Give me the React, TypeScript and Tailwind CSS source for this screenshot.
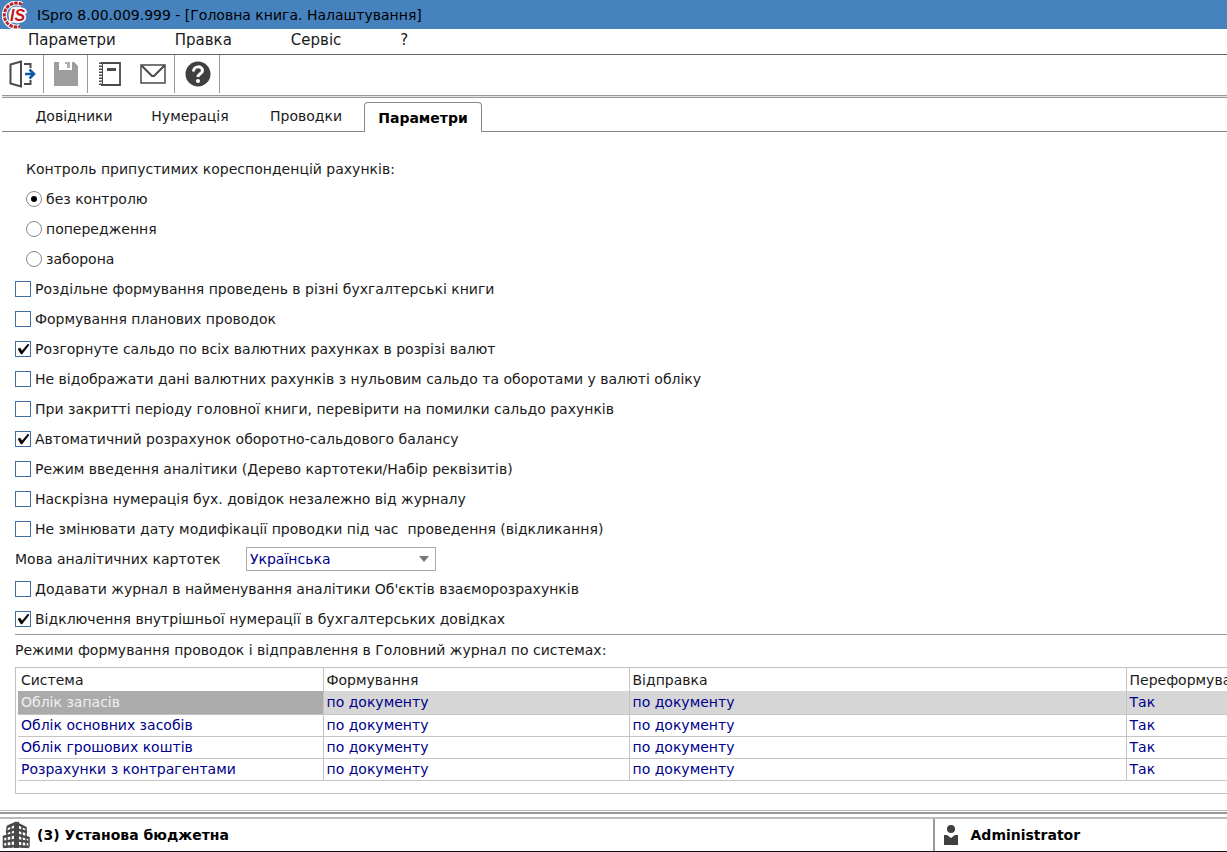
import React, { useState } from "react"

interface CheckOption {
    id: string
    label: string
    checked: boolean
}

interface SystemRow {
    system: string
    forming: string
    sending: string
    reforming: string
}

const MENU = ["Параметри", "Правка", "Сервіс", "?"]
const TABS = ["Довідники", "Нумерація", "Проводки", "Параметри"]
const CONTROL_MODES = ["без контролю", "попередження", "заборона"]

const MAIN_OPTIONS: CheckOption[] = [
    { id: "separate", label: "Роздільне формування проведень в різні бухгалтерські книги", checked: false },
    { id: "planned", label: "Формування планових проводок", checked: false },
    { id: "expanded", label: "Розгорнуте сальдо по всіх валютних рахунках в розрізі валют", checked: true },
    { id: "hide-zero", label: "Не відображати дані валютних рахунків з нульовим сальдо та оборотами у валюті обліку", checked: false },
    { id: "closing", label: "При закритті періоду головної книги, перевірити на помилки сальдо рахунків", checked: false },
    { id: "auto-balance", label: "Автоматичний розрахунок оборотно-сальдового балансу", checked: true },
    { id: "analytics", label: "Режим введення аналітики (Дерево картотеки/Набір реквізитів)", checked: false },
    { id: "numbering", label: "Наскрізна нумерація бух. довідок незалежно від журналу", checked: false },
    { id: "mod-date", label: "Не змінювати дату модифікації проводки під час  проведення (відкликання)", checked: false },
]

const EXTRA_OPTIONS: CheckOption[] = [
    { id: "add-journal", label: "Додавати журнал в найменування аналітики Об'єктів взаєморозрахунків", checked: false },
    { id: "no-inner", label: "Відключення внутрішньої нумерації в бухгалтерських довідках", checked: true },
]

const SYSTEMS: SystemRow[] = [
    "Облік запасів",
    "Облік основних засобів",
    "Облік грошових коштів",
    "Розрахунки з контрагентами",
].map(system => ({ system, forming: "по документу", sending: "по документу", reforming: "Так" }))

function Logo() {
    return (
        <svg width="28" height="28" viewBox="0 0 28 28" aria-hidden="true">
            <path d="M20 3.500A12 12 0 1 0 18 25.500" fill="none" stroke="#fff" strokeWidth="5" />
            <path d="M20 3.500A12 12 0 1 0 18 25.500" fill="none" stroke="#b8252c" strokeWidth="3" strokeDasharray="3.500 1" />
            <circle cx="15" cy="14" r="8.500" fill="#f2e6e8" />
            <text x="8" y="20" fontSize="16" fontWeight="bold" fontStyle="italic" fontFamily="Liberation Sans, sans-serif" fill="#c4161c" stroke="#fff" strokeWidth="3" paintOrder="stroke">IS</text>
        </svg>
    )
}

function ExitIcon() {
    return (
        <svg width="28" height="30" viewBox="0 0 28 30" fill="none" aria-hidden="true">
            <path d="M2.500 5.500L13 2.500v25L2.500 24.500z" stroke="#4a4a4a" strokeWidth="2" />
            <path d="M16 5h6.500v4M16 25h6.500v-4" stroke="#4a4a4a" strokeWidth="2" />
            <path d="M17 15h8M21.500 10.500L26 15l-4.500 4.500" stroke="#0e5aa7" strokeWidth="2.500" />
        </svg>
    )
}

function SaveIcon() {
    return (
        <svg width="26" height="26" viewBox="0 0 26 26" aria-hidden="true">
            <path d="M1 1h5v8h13V1h2l4 4v20H1z" fill="#9d9d9d" />
            <path d="M12 1h5v6h-3V3h-2z" fill="#b0b0b0" />
        </svg>
    )
}

function NotebookIcon() {
    return (
        <svg width="24" height="26" viewBox="0 0 24 26" fill="none" stroke="#4a4a4a" aria-hidden="true">
            <path d="M3 2h19v22H3" strokeWidth="1.800" />
            <path d="M4.500 2v22" strokeWidth="1" />
            <path d="M2.500 1.500v23" strokeWidth="3" strokeDasharray="1.500 1.500" />
            <path d="M9 8.500h9" strokeWidth="3" />
        </svg>
    )
}

function MailIcon() {
    return (
        <svg width="26" height="20" viewBox="0 0 26 20" fill="none" stroke="#4a4a4a" strokeWidth="1.500" aria-hidden="true">
            <path d="M1 1h24v18H1z" />
            <path d="M1.500 1.500L12 12h2L24.500 1.500" strokeWidth="2" />
        </svg>
    )
}

function HelpIcon() {
    return (
        <svg width="26" height="26" viewBox="0 0 26 26" fill="none" aria-hidden="true">
            <circle cx="13" cy="13" r="12.500" fill="#404040" />
            <path d="M8.500 10.500c0-6 9-6 9-1 0 3.500-4.500 3-4.500 6.500" stroke="#fff" strokeWidth="3" />
            <circle cx="13" cy="20" r="2" fill="#fff" />
        </svg>
    )
}

function BuildingIcon() {
    return (
        <svg width="28" height="28" viewBox="0 0 28 28" fill="none" stroke="#484848" aria-hidden="true">
            {/* Front corner of the block, then the floors on both sides */}
            <path d="M12 2l5-1.500V27h-5z" fill="#484848" stroke="none" />
            <path d="M5 6l9-4 10 5M4 11l9-3 12 3M1 16l12-3 14 4M1 21l12-2 14 2M1 26l12-1 14 1" strokeWidth="2.500" />
            <path d="M5 6v21M9 4v23M20 4v23M24 6v21M1.500 15v11M27 16v10" strokeWidth="1.500" />
        </svg>
    )
}

function UserIcon() {
    return (
        <svg width="16" height="22" viewBox="0 0 16 22" fill="#404040" aria-hidden="true">
            <circle cx="8" cy="5" r="4" />
            <path d="M1 11h3l4 3 4-3h3v10H1z" />
        </svg>
    )
}

function ToolButton({ label, children }: { label: string; children: React.ReactNode }) {
    return (
        <button type="button" aria-label={label} className="flex h-full w-[43px] items-center justify-center">
            {children}
        </button>
    )
}

function CheckRow({ option }: { option: CheckOption }) {
    return (
        <div className="flex h-[30px] items-center gap-1">
            <span className="grid place-items-center">
                <input
                    id={option.id}
                    type="checkbox"
                    defaultChecked={option.checked}
                    className="peer size-4 appearance-none border border-[#3f6fa3] bg-white [grid-area:1/1]"
                />
                <svg viewBox="0 0 16 16" className="pointer-events-none invisible size-4 [grid-area:1/1] peer-checked:visible" aria-hidden="true">
                    <path d="M3 8l2-1 2 3 6-7 1 1-7 9H6z" fill="#000" stroke="#000" strokeWidth="0.600" />
                </svg>
            </span>
            <label htmlFor={option.id} className="whitespace-pre">{option.label}</label>
        </div>
    )
}

export default function App() {
    const [activeTab, setActiveTab] = useState("Параметри")

    return (
        <div className="flex min-h-screen flex-col overflow-hidden bg-white font-['DejaVu_Sans',sans-serif] text-[14px] leading-4 text-[#1a1a1a]">
            <header className="flex h-[29px] items-center gap-[7px] bg-[#4682bd] pl-0.5 text-black">
                <Logo />
                <h1>ISpro 8.00.009.999 - [Головна книга. Налаштування]</h1>
            </header>

            <nav className="flex h-[26px] items-center gap-[59px] border-b border-[#666] pb-1 pl-7 text-[15px]">
                {MENU.map(item => (
                    <button key={item} type="button">{item}</button>
                ))}
            </nav>

            {/* Toolbar */}
            <div className="flex h-10 pb-0.5">
                <div className="flex border-r border-[#9a9a9a]">
                    <ToolButton label="Вихід"><ExitIcon /></ToolButton>
                </div>
                <div className="flex border-r border-[#9a9a9a]">
                    <ToolButton label="Зберегти"><SaveIcon /></ToolButton>
                </div>
                <div className="flex border-r border-[#9a9a9a]">
                    <ToolButton label="Журнал"><NotebookIcon /></ToolButton>
                    <ToolButton label="Пошта"><MailIcon /></ToolButton>
                </div>
                <div className="flex border-r border-[#9a9a9a] pl-px">
                    <ToolButton label="Довідка"><HelpIcon /></ToolButton>
                </div>
            </div>
            <div className="ml-0.5 h-[3px] border-y border-[#999] bg-[#e4e4e4]" />

            {/* Tabs */}
            <div role="tablist" className="ml-0.5 flex h-[34px] items-end border-b border-[#888] pl-[14px]">
                {TABS.map(tab => (
                    <button
                        key={tab}
                        type="button"
                        role="tab"
                        aria-selected={tab === activeTab}
                        onClick={() => setActiveTab(tab)}
                        className={
                            tab === activeTab
                                ? "-mb-px h-[30px] w-[118px] rounded-t border border-b-0 border-[#888] bg-white font-bold text-black"
                                : "h-[30px] w-[116px]"
                        }
                    >
                        {tab}
                    </button>
                ))}
            </div>

            <main className="flex-1 pt-[22px] pb-4 pl-[15px]">
                <fieldset className="pl-[11px]">
                    <legend className="h-[30px] leading-[30px]">Контроль припустимих кореспонденцій рахунків:</legend>
                    {CONTROL_MODES.map((mode, i) => (
                        <label key={mode} className="flex h-[30px] items-center gap-1">
                            <span className="grid place-items-center">
                                <input
                                    type="radio"
                                    name="control"
                                    defaultChecked={i === 0}
                                    className="peer size-4 appearance-none rounded-full border border-[#888] bg-white [grid-area:1/1]"
                                />
                                <span className="pointer-events-none invisible size-1.5 rounded-full bg-black [grid-area:1/1] peer-checked:visible" />
                            </span>
                            {mode}
                        </label>
                    ))}
                </fieldset>

                {MAIN_OPTIONS.map(option => <CheckRow key={option.id} option={option} />)}

                <div className="flex h-[30px] items-center">
                    <label htmlFor="language" className="w-[231px]">Мова аналітичних картотек</label>
                    <div className="grid w-[190px] items-center">
                        <select id="language" className="h-6 appearance-none border border-[#aaa] bg-white pl-[3px] text-[#00008b] [grid-area:1/1]">
                            <option>Українська</option>
                        </select>
                        <svg width="10" height="6" viewBox="0 0 10 6" className="pointer-events-none mr-[7px] justify-self-end [grid-area:1/1]" aria-hidden="true">
                            <path d="M0 0h10L5 6z" fill="#777" />
                        </svg>
                    </div>
                </div>

                {EXTRA_OPTIONS.map(option => <CheckRow key={option.id} option={option} />)}

                <section className="border-t border-[#999]">
                    <h2 className="h-8 leading-[30px]">Режими формування проводок і відправлення в Головний журнал по системах:</h2>
                    <div className="overflow-hidden border border-r-0 border-[#c0c0c6] pb-3 pl-0.5">
                        <table className="w-full table-fixed border-collapse text-left whitespace-nowrap">
                            <colgroup>
                                <col className="w-[305px]" />
                                <col className="w-[306px]" />
                                <col />
                                <col className="w-[101px]" />
                            </colgroup>
                            <thead>
                                <tr className="h-[23px] [&>th]:border-r [&>th]:border-[#c4c4c4] [&>th]:pl-[3px] [&>th]:font-normal [&>th:last-child]:border-r-0">
                                    <th>Система</th>
                                    <th>Формування</th>
                                    <th>Відправка</th>
                                    <th>Переформува</th>
                                </tr>
                            </thead>
                            <tbody className="text-[#00008b]">
                                {SYSTEMS.map((row, i) => (
                                    <tr
                                        key={row.system}
                                        className={
                                            i === 0
                                                ? "h-[23px] bg-[#d6d6d6] [&>td]:border-r [&>td]:border-b [&>td]:border-[#c4c4c4] [&>td]:pl-[3px] [&>td:first-child]:bg-[#ababab] [&>td:first-child]:text-[#f0f0f0] [&>td:last-child]:border-r-0"
                                                : "h-[22px] [&>td]:border-r [&>td]:border-b [&>td]:border-[#c4c4c4] [&>td]:pl-[3px] [&>td:last-child]:border-r-0"
                                        }
                                    >
                                        <td>{row.system}</td>
                                        <td>{row.forming}</td>
                                        <td>{row.sending}</td>
                                        <td>{row.reforming}</td>
                                    </tr>
                                ))}
                            </tbody>
                        </table>
                    </div>
                </section>
            </main>

            {/* Status bar */}
            <div className="h-1 border-t border-b-2 border-t-[#bbb] border-b-[#999]" />
            <footer className="mt-[3px] flex h-9 border-t-2 border-b-2 border-t-[#bbb] border-b-[#111] font-bold text-black">
                <div className="flex flex-1 items-center gap-[7px] pl-0.5">
                    <BuildingIcon />
                    (3) Установа бюджетна
                </div>
                <div className="flex w-[24%] items-center gap-3 border-l-2 border-[#999] pl-2">
                    <UserIcon />
                    Administrator
                </div>
            </footer>
        </div>
    )
}
